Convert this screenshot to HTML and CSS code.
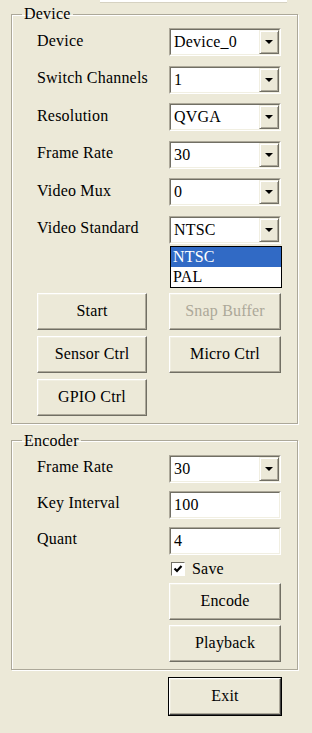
FILE: index.html
```html
<!DOCTYPE html>
<html lang="en">
<head>
  <meta charset="UTF-8">
  <title>Camera Control</title>
  <link rel="stylesheet" href="styles.css">
</head>
<body>
  <div class="window">
    <div class="top-edge"></div>

    <!-- Grupo Device -->
    <fieldset class="group device">
      <legend>Device</legend>
      <div class="fields">
        <span class="label">Device</span>
        <div class="combo"><div class="combo-in"><span class="value">Device_0</span><span class="drop"></span></div></div>

        <span class="label">Switch Channels</span>
        <div class="combo"><div class="combo-in"><span class="value">1</span><span class="drop"></span></div></div>

        <span class="label">Resolution</span>
        <div class="combo"><div class="combo-in"><span class="value">QVGA</span><span class="drop"></span></div></div>

        <span class="label">Frame Rate</span>
        <div class="combo"><div class="combo-in"><span class="value">30</span><span class="drop"></span></div></div>

        <span class="label">Video Mux</span>
        <div class="combo"><div class="combo-in"><span class="value">0</span><span class="drop"></span></div></div>

        <span class="label">Video Standard</span>
        <div class="combo open">
          <div class="combo-in"><span class="value">NTSC</span><span class="drop"></span></div>
          <ul class="list">
            <li class="hover">NTSC</li>
            <li>PAL</li>
          </ul>
        </div>
      </div>

      <div class="buttons">
        <button class="btn">Start</button>
        <button class="btn" disabled>Snap Buffer</button>
        <button class="btn">Sensor Ctrl</button>
        <button class="btn">Micro Ctrl</button>
        <button class="btn">GPIO Ctrl</button>
      </div>
    </fieldset>

    <!-- Grupo Encoder -->
    <fieldset class="group encoder">
      <legend>Encoder</legend>
      <div class="fields">
        <span class="label">Frame Rate</span>
        <div class="combo"><div class="combo-in"><span class="value">30</span><span class="drop"></span></div></div>

        <span class="label">Key Interval</span>
        <div class="edit"><div class="edit-in">100</div></div>

        <span class="label">Quant</span>
        <div class="edit"><div class="edit-in">4</div></div>
      </div>

      <div class="side">
        <label class="check">
          <span class="box"><svg width="10" height="10" viewBox="0 0 10 10"><path d="M1.5 4.5 L4 7 L8.5 2" fill="none" stroke="#000" stroke-width="2.2"/></svg></span>
          Save
        </label>
        <button class="btn wide">Encode</button>
        <button class="btn wide">Playback</button>
      </div>
    </fieldset>

    <div class="exit-row">
      <button class="btn wide default">Exit</button>
    </div>
  </div>
</body>
</html>
```

FILE: styles.css
```css
body {
  margin: 0;
  background: #ECE9D8;
  color: #000;
  font-family: 'Liberation Serif', 'Times New Roman', serif;
  font-size: 16px;
  letter-spacing: 0.2px;
}

.window {
  width: 312px;
  height: 733px;
  padding: 0 0 0 11px;
  box-sizing: border-box;
}

.top-edge {
  width: 187px;
  height: 2px;
  margin-left: 89px;
  background: #fff;
  border-bottom: 1px solid #D6D2C2;
}

/* Group boxes */
.group {
  width: 287px;
  margin: 3px 0 0;
  padding: 0;
  box-sizing: border-box;
  border: 1px solid #ACA899;
  box-shadow: inset 1px 1px 0 #fff, 1px 1px 0 #fff;
}

.group legend {
  margin-left: 10px;
  padding: 0 2px;
  line-height: 16px;
}

.fields {
  display: grid;
  grid-template-columns: 132px 112px;
  row-gap: 9.5px;
  padding: 6px 0 0 25px;
  align-items: center;
}

.label {
  padding-bottom: 3px;
  white-space: nowrap;
}

/* Combo boxes */
.combo,
.edit {
  position: relative;
  height: 28px;
  box-sizing: border-box;
  border: 1px solid;
  border-color: #ACA899 #fff #fff #ACA899;
}

.combo-in,
.edit-in {
  height: 100%;
  box-sizing: border-box;
  display: flex;
  background: #fff;
  border: 1px solid;
  border-color: #716F64 #F1EFE2 #F1EFE2 #716F64;
}

.value {
  flex: 1;
  padding: 3px 0 0 3px;
}

.edit-in {
  padding: 3px 0 0 3px;
}

.drop {
  width: 18px;
  display: flex;
  align-items: center;
  justify-content: center;
  background: #ECE9D8;
  border: 1px solid;
  border-color: #F1EFE2 #716F64 #716F64 #F1EFE2;
  box-shadow: inset 1px 1px 0 #fff, inset -1px -1px 0 #ACA899;
}

.drop::after {
  content: "";
  border-left: 4px solid transparent;
  border-right: 4px solid transparent;
  border-top: 4px solid #000;
}

.list {
  position: absolute;
  top: 100%;
  left: 0;
  width: 112px;
  margin: 3px 0 0;
  padding: 0;
  list-style: none;
  background: #fff;
  border: 1px solid #000;
  box-sizing: border-box;
  z-index: 2;
}

.list li {
  height: 20px;
  line-height: 20px;
  padding-left: 2px;
}

.list li.hover {
  background: #316AC5;
  color: #fff;
}

/* Buttons */
.buttons {
  display: grid;
  grid-template-columns: 110px 112px;
  column-gap: 22px;
  row-gap: 6px;
  padding: 49px 0 7px 25px;
}

.btn {
  height: 37px;
  padding: 0;
  font: inherit;
  letter-spacing: inherit;
  color: #000;
  background: #ECE9D8;
  border: 1px solid;
  border-color: #fff #716F64 #716F64 #fff;
  box-shadow: inset -1px -1px 0 #ACA899, inset 1px 1px 0 #F1EFE2;
}

.btn:disabled {
  color: #ACA899;
}

.btn.wide {
  width: 112px;
}

.btn.default {
  outline: 1px solid #000;
  outline-offset: 0;
  border-color: #fff #404040 #404040 #fff;
}

/* Encoder */
.encoder {
  margin-top: 9px;
}

.encoder .fields {
  row-gap: 8px;
  padding-top: 6px;
}

.side {
  display: flex;
  flex-direction: column;
  align-items: flex-start;
  gap: 5px;
  padding: 5px 0 7px 157px;
}

.check {
  display: flex;
  align-items: center;
  gap: 7px;
  height: 18px;
  padding-left: 2px;
}

.box {
  width: 14px;
  height: 14px;
  box-sizing: border-box;
  display: flex;
  align-items: center;
  justify-content: center;
  background: #fff;
  border: 1px solid;
  border-color: #716F64 #fff #fff #716F64;
}

.exit-row {
  padding: 8px 0 0 158px;
}
```
